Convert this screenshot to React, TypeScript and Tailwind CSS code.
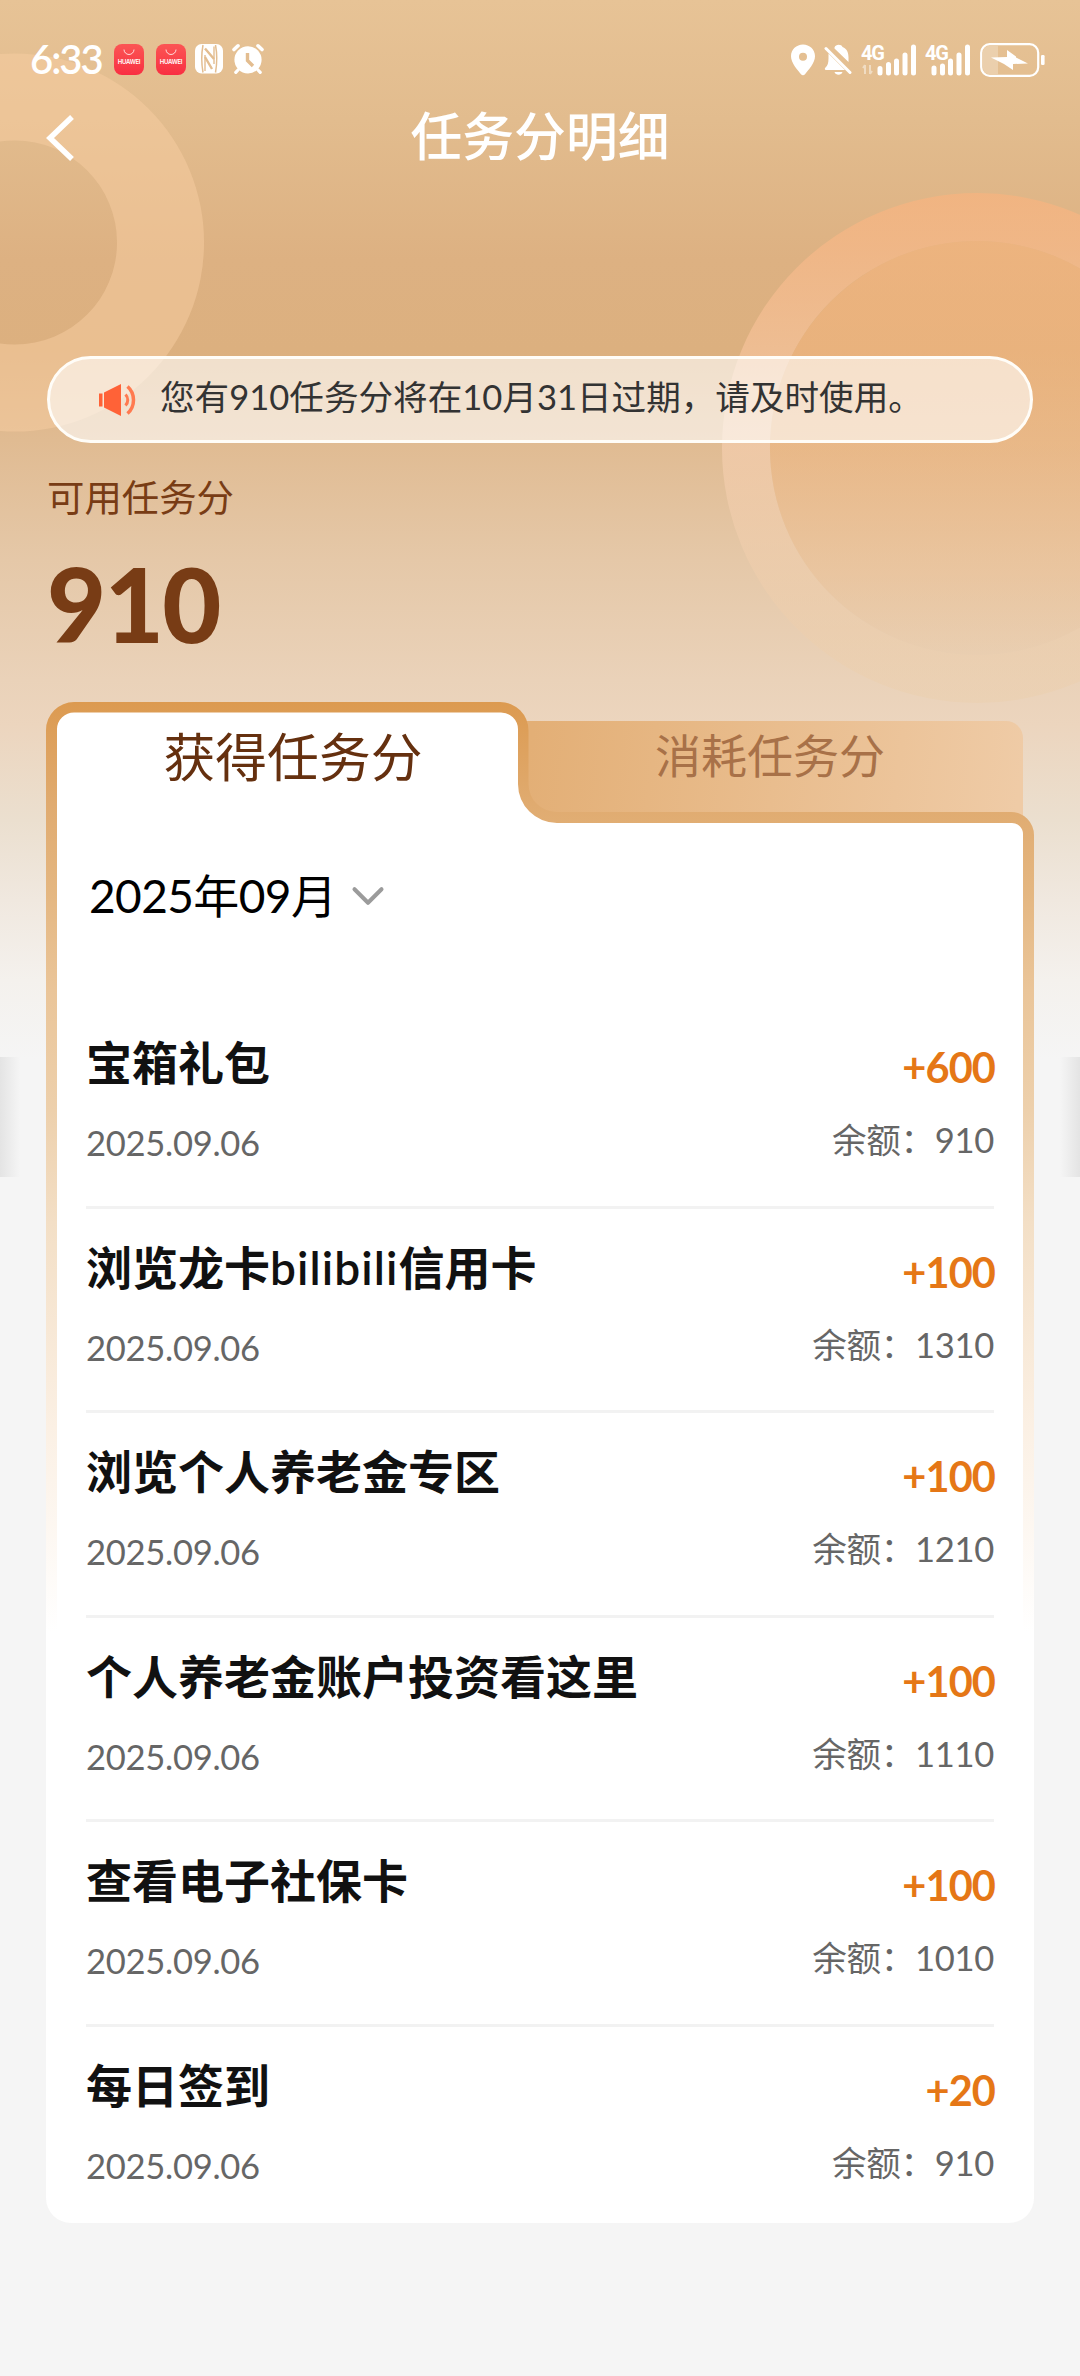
import React from "react";
import { ChevronDown } from "lucide-react";

const RECORDS = [
  { title: "宝箱礼包", date: "2025.09.06", amount: "+600", balance: "910" },
  { title: "浏览龙卡bilibili信用卡", date: "2025.09.06", amount: "+100", balance: "1310" },
  { title: "浏览个人养老金专区", date: "2025.09.06", amount: "+100", balance: "1210" },
  { title: "个人养老金账户投资看这里", date: "2025.09.06", amount: "+100", balance: "1110" },
  { title: "查看电子社保卡", date: "2025.09.06", amount: "+100", balance: "1010" },
  { title: "每日签到", date: "2025.09.06", amount: "+20", balance: "910" },
];

function HuaweiBadge() {
  return (
    <div className="flex h-[31px] w-[30px] flex-col items-center rounded-[8px] bg-gradient-to-b from-[#fb5454] to-[#f92d42]">
      <svg width="12" height="7" viewBox="0 0 12 7" className="mt-[5px]" fill="none" stroke="#fff" strokeWidth="0.8">
        <path d="M1 0.5a5 5 0 0 0 10 0" />
      </svg>
      <span className="mt-[2px] font-['Inter'] text-[6px] font-semibold leading-[8px] tracking-[-0.3px] text-white">HUAWEI</span>
    </div>
  );
}

function NfcIcon() {
  return (
    <svg width="28" height="30" viewBox="0 0 28 30">
      <rect width="28" height="29.5" rx="6.5" fill="#fff" />
      <g fill="none" stroke="#e3bd90">
        <path d="M8 1C6.5 9 6.5 20 8 28.5M20.5 1C22 9 22 20 20.5 28.5" strokeWidth="1.5" />
        <path d="M10 4.5 19 15M10 13 17 25" strokeWidth="2.4" />
        <path d="M10 11V27M19 2.5V20" strokeWidth="1.4" />
      </g>
    </svg>
  );
}

function AlarmIcon() {
  return (
    <svg width="32" height="32" viewBox="0 0 32 32" fill="none" strokeLinecap="round">
      <path d="M2 6.5 6 2.8M30 6.5 26 2.8" stroke="#fff" strokeWidth="3.6" />
      <path d="M6 27 3.8 29.4M26 27l2.2 2.4" stroke="#fff" strokeWidth="3.2" />
      <circle cx="16" cy="16.8" r="13.6" fill="#fff" />
      <path d="M15.5 10v7.5l5.5 5.5" stroke="#e3bd90" strokeWidth="3.4" strokeLinecap="butt" />
    </svg>
  );
}

function PinIcon() {
  return (
    <svg width="24" height="32" viewBox="0 0 24 32">
      <path
        d="M12 0.5C5.5 0.5 0 5.6 0 12.2c0 6.6 6.6 13.8 10 18 1.1 1.4 2.9 1.4 4 0 3.4-4.2 10-11.4 10-18C24 5.6 18.5.5 12 .5Zm0 8.2a4 4 0 1 1 0 8 4 4 0 0 1 0-8Z"
        fill="#fff"
        fillRule="evenodd"
      />
    </svg>
  );
}

function MutedBellIcon() {
  return (
    <svg width="28" height="32" viewBox="0 0 28 32">
      <path d="M10.5 3.5C11.5 0 17.5 0 18.5 3c4.5 1.8 6 5.5 6 10.5V18L10.5 4.5Z" fill="#fff" />
      <path d="M4.5 9.5 21 26H2c-1.5 0-1.5-1.6-.5-2.5 2.2-2 3-4.5 3-9Z" fill="#fff" />
      <path d="M10.5 28h8c-1 3.6-7 3.6-8 0Z" fill="#fff" />
      <path d="M2 4.5 26 28.5" stroke="#fff" strokeWidth="3" strokeLinecap="round" />
    </svg>
  );
}

function BatteryIcon() {
  return (
    <svg width="66" height="34" viewBox="0 0 66 34">
      <path d="M9 3h9v28H9c-3.5 0-6-2.5-6-6V9c0-3.5 2.5-6 6-6Z" fill="#fff" fillOpacity="0.25" />
      <rect x="1.2" y="1.2" width="57" height="31.6" rx="8.5" fill="none" stroke="#fff" strokeWidth="2.2" />
      <rect x="61" y="12" width="3.6" height="10" rx="1.2" fill="#fff" />
      <path d="M27 7 36 13.5V14.5L48 20.5 33 21V27L24 21 11 14.5 27 14Z" fill="#fff" />
    </svg>
  );
}

function StatusBar() {
  return (
    <div className="flex h-[118px] items-start justify-between pl-[30px] pr-[34px] pt-[43px]">
      <div className="flex items-center">
        <span className="w-[72px] font-['Lato'] text-[40px] font-semibold leading-[32px] tracking-[-2px] text-white">6:33</span>
        <div className="ml-[12px] flex">
          <HuaweiBadge />
          <div className="w-[12px]" />
          <HuaweiBadge />
        </div>
        <div className="ml-[9px]"><NfcIcon /></div>
        <div className="ml-[9px]"><AlarmIcon /></div>
      </div>
      <div className="flex items-center">
        <PinIcon />
        <div className="ml-[9px]"><MutedBellIcon /></div>
        {/* SIM 1 */}
        <div className="relative ml-[9px] h-[32px] w-[56px]">
          <span className="block font-['Roboto'] text-[20px] font-bold leading-[18px] tracking-[-1.3px] text-white">4G</span>
          <svg width="56" height="32" viewBox="0 0 56 32" className="absolute left-0 top-0">
            <path d="M4 21v9M2 24l2-3M9 21v9M9 30l2-3" stroke="#fff" strokeOpacity="0.45" strokeWidth="2" />
            <path d="M19 24.5v4.5M27.5 20.5v8.5M35.5 17v12M44 11v18M52.5 3v26" stroke="#fff" strokeWidth="5" strokeLinecap="round" />
          </svg>
        </div>
        {/* SIM 2 */}
        <div className="relative ml-[8px] h-[32px] w-[46px]">
          <span className="block font-['Roboto'] text-[20px] font-bold leading-[18px] tracking-[-1.3px] text-white">4G</span>
          <svg width="46" height="32" viewBox="0 0 46 32" className="absolute left-0 top-0">
            <path d="M9 24v5M17.500 22v7M25.500 17v12M34 11v18M42.500 3v26" stroke="#fff" strokeWidth="5" strokeLinecap="round" />
          </svg>
        </div>
        <div className="ml-[9px]"><BatteryIcon /></div>
      </div>
    </div>
  );
}

function HeaderRings() {
  return (
    <svg width="1080" height="1060" viewBox="0 0 1080 1060" className="absolute left-0 top-0">
      <defs>
        <linearGradient id="disc" x1="0" y1="0" x2="0" y2="1">
          <stop offset="0" stopColor="#f8b57c" stopOpacity="0.58" />
          <stop offset="0.5" stopColor="#f3b47a" stopOpacity="0.45" />
          <stop offset="0.8" stopColor="#efbf90" stopOpacity="0.4" />
          <stop offset="1" stopColor="#eac8a2" stopOpacity="0.25" />
        </linearGradient>
        <linearGradient id="ring" x1="0" y1="0" x2="0" y2="1">
          <stop offset="0" stopColor="#fab37e" stopOpacity="0.65" />
          <stop offset="0.5" stopColor="#f6cfb0" stopOpacity="0.65" />
          <stop offset="1" stopColor="#ebceaa" stopOpacity="0.4" />
        </linearGradient>
      </defs>
      <path
        d="M15 53.5a189 189 0 1 1 0 378 189 189 0 0 1 0-378Zm0 87a102 102 0 1 0 0 204 102 102 0 0 0 0-204Z"
        fill="#f8cda2"
        fillOpacity="0.5"
      />
      <path
        d="M977 193a255 255 0 1 1 0 510 255 255 0 0 1 0-510Zm0 48a207 207 0 1 0 0 414 207 207 0 0 0 0-414Z"
        fill="url(#ring)"
      />
      <circle cx="977" cy="448" r="207" fill="url(#disc)" />
    </svg>
  );
}

/* Folder outline: raised left tab that steps down into the card */
function FolderFrame() {
  return (
    <svg width="988" height="1521" viewBox="0 0 988 1521" className="absolute left-0 top-0">
      <defs>
        <linearGradient id="edge" x1="0" y1="0" x2="0" y2="930" gradientUnits="userSpaceOnUse">
          <stop offset="0" stopColor="#dc9a50" />
          <stop offset="0.11" stopColor="#e0ab70" />
          <stop offset="0.2" stopColor="#e4b680" />
          <stop offset="0.31" stopColor="#eac599" />
          <stop offset="0.44" stopColor="#edd0ac" />
          <stop offset="0.56" stopColor="#f3dfc6" />
          <stop offset="0.78" stopColor="#fbf0e4" />
          <stop offset="1" stopColor="#ffffff" />
        </linearGradient>
        <linearGradient id="tab" x1="490" y1="0" x2="977" y2="60" gradientUnits="userSpaceOnUse">
          <stop offset="0" stopColor="#e3af76" />
          <stop offset="1" stopColor="#efcba6" />
        </linearGradient>
      </defs>
      <path d="M460 19H960a17 17 0 0 1 17 17V150H460Z" fill="url(#tab)" />
      <path
        d="M0 28A28 28 0 0 1 28 0H454A28.5 28.5 0 0 1 482.5 28.5V82A28 28 0 0 0 510.5 110H965A23 23 0 0 1 988 133V1496A25 25 0 0 1 963 1521H25A25 25 0 0 1 0 1496Z"
        fill="url(#edge)"
      />
      <path
        d="M11 27A17 17 0 0 1 28 10.5H455A17 17 0 0 1 472 27V82A39 39 0 0 0 511 121H966A11 11 0 0 1 977 132V1510H11Z"
        fill="#fff"
      />
    </svg>
  );
}

function RecordTitle({ text }: { text: string }) {
  // Latin runs get slightly looser tracking than the Chinese around them
  return (
    <div className="text-[46px] font-semibold leading-[60px] text-[#111]">
      {text.split(/([a-z]+)/).map((part, i) =>
        i % 2 === 1 ? (
          <span key={i} className="tracking-[1.1px]">{part}</span>
        ) : (
          part
        )
      )}
    </div>
  );
}

export default function App() {
  return (
    <div className="relative h-[2376px] w-[1080px] overflow-hidden bg-[#f5f5f5] font-['Lato','Noto_Sans_CJK_SC',sans-serif]">
      <div className="absolute left-0 top-0 h-[1060px] w-full bg-[linear-gradient(to_bottom,#e7c396_0px,#e2bc8e_120px,#ddb182_260px,#dcb07f_350px,#e0bb92_440px,#e5c8a8_560px,#ead2b9_680px,#ecd5be_725px,#ebdfcf_820px,#f0e8df_900px,#f4f1ed_980px,#f5f5f5_1060px)]" />
      <HeaderRings />
      {/* Edge shadows */}
      <div className="absolute left-0 top-[1057px] h-[120px] w-[20px] bg-gradient-to-r from-[#e4e4e4] to-[#f5f5f5]" />
      <div className="absolute right-0 top-[1057px] h-[120px] w-[20px] bg-gradient-to-l from-[#e4e4e4] to-[#f5f5f5]" />

      <div className="relative">
        <StatusBar />

        <header className="grid h-[40px] grid-cols-[100px_1fr_100px] items-center">
          <svg width="28" height="46" viewBox="0 0 28 46" className="-mt-[5px] ml-[46px]" fill="none" stroke="#fff" strokeWidth="5.5">
            <path d="M26 2 4 23l22 21" />
          </svg>
          <h1 className="-mt-[8px] text-center text-[51.8px] font-medium leading-[52px] text-white">任务分明细</h1>
        </header>

        <div className="mx-[47px] mt-[198px] flex h-[87px] items-center rounded-full border-[3px] border-[#fffdf8] bg-white/60 pl-[49px]">
          <svg width="38" height="34" viewBox="0 0 38 34">
            <path d="M0 10.5h3.500v13H0ZM5 9.500 22 1v32L5 24.500Z" fill="#ff6237" />
            <path d="M26.500 11.500c3 3 3 8 0 11" fill="none" stroke="#ff7a50" strokeWidth="3" />
            <path d="M28.500 3.500c8 7 8 20 0 27" fill="none" stroke="#ff7a50" strokeWidth="3.5" />
          </svg>
          <p className="-mt-[5px] ml-[23px] text-[34.6px] leading-[40px] text-[#333]">您有910任务分将在10月31日过期，请及时使用。</p>
        </div>

        <p className="ml-[47px] mt-[33px] text-[37.4px] leading-[44px] text-[#783c15]">可用任务分</p>
        <p className="ml-[47px] mt-[32px] text-[102px] font-black leading-[104px] tracking-[-1.5px] text-[#783c15]">910</p>

        <section className="relative mx-[46px] mt-[46px] h-[1521px]">
          <FolderFrame />
          <div className="relative">
            <div className="flex h-[112px]">
              <div className="w-[494px] pt-[27px] text-center text-[51.8px] leading-[56px] text-[#65300f]">获得任务分</div>
              <div className="w-[460px] pt-[28px] text-center text-[46px] leading-[52px] text-[#a87148]">消耗任务分</div>
            </div>
            <div className="ml-[43px] mt-[54px] flex h-[56px] items-center">
              <span className="text-[46px] leading-[56px] tracking-[-0.6px] text-black">2025年09月</span>
              <ChevronDown className="ml-[5px] h-[54px] w-[54px] text-[#9b9b9b]" strokeWidth={1.8} />
            </div>
            <ul className="ml-[40px] mr-[40px] mt-[80px]">
              {RECORDS.map((r, i) => (
                <li key={i} className="flex h-[204.5px] justify-between border-b-[3px] border-[#f2f2f2] pt-[29px] last:border-b-0">
                  <div>
                    <RecordTitle text={r.title} />
                    <div className="mt-[30px] text-[34.6px] leading-[40px] tracking-[-0.3px] text-[#666]">{r.date}</div>
                  </div>
                  <div className="text-right">
                    <div className="-mr-[1px] mt-[4px] text-[41.5px] font-bold leading-[60px] tracking-[-0.9px] text-[#e57716]">{r.amount}</div>
                    <div className="mt-[23px] text-[34.6px] leading-[40px] tracking-[-0.3px] text-[#666]">余额：{r.balance}</div>
                  </div>
                </li>
              ))}
            </ul>
          </div>
        </section>
      </div>
    </div>
  );
}
